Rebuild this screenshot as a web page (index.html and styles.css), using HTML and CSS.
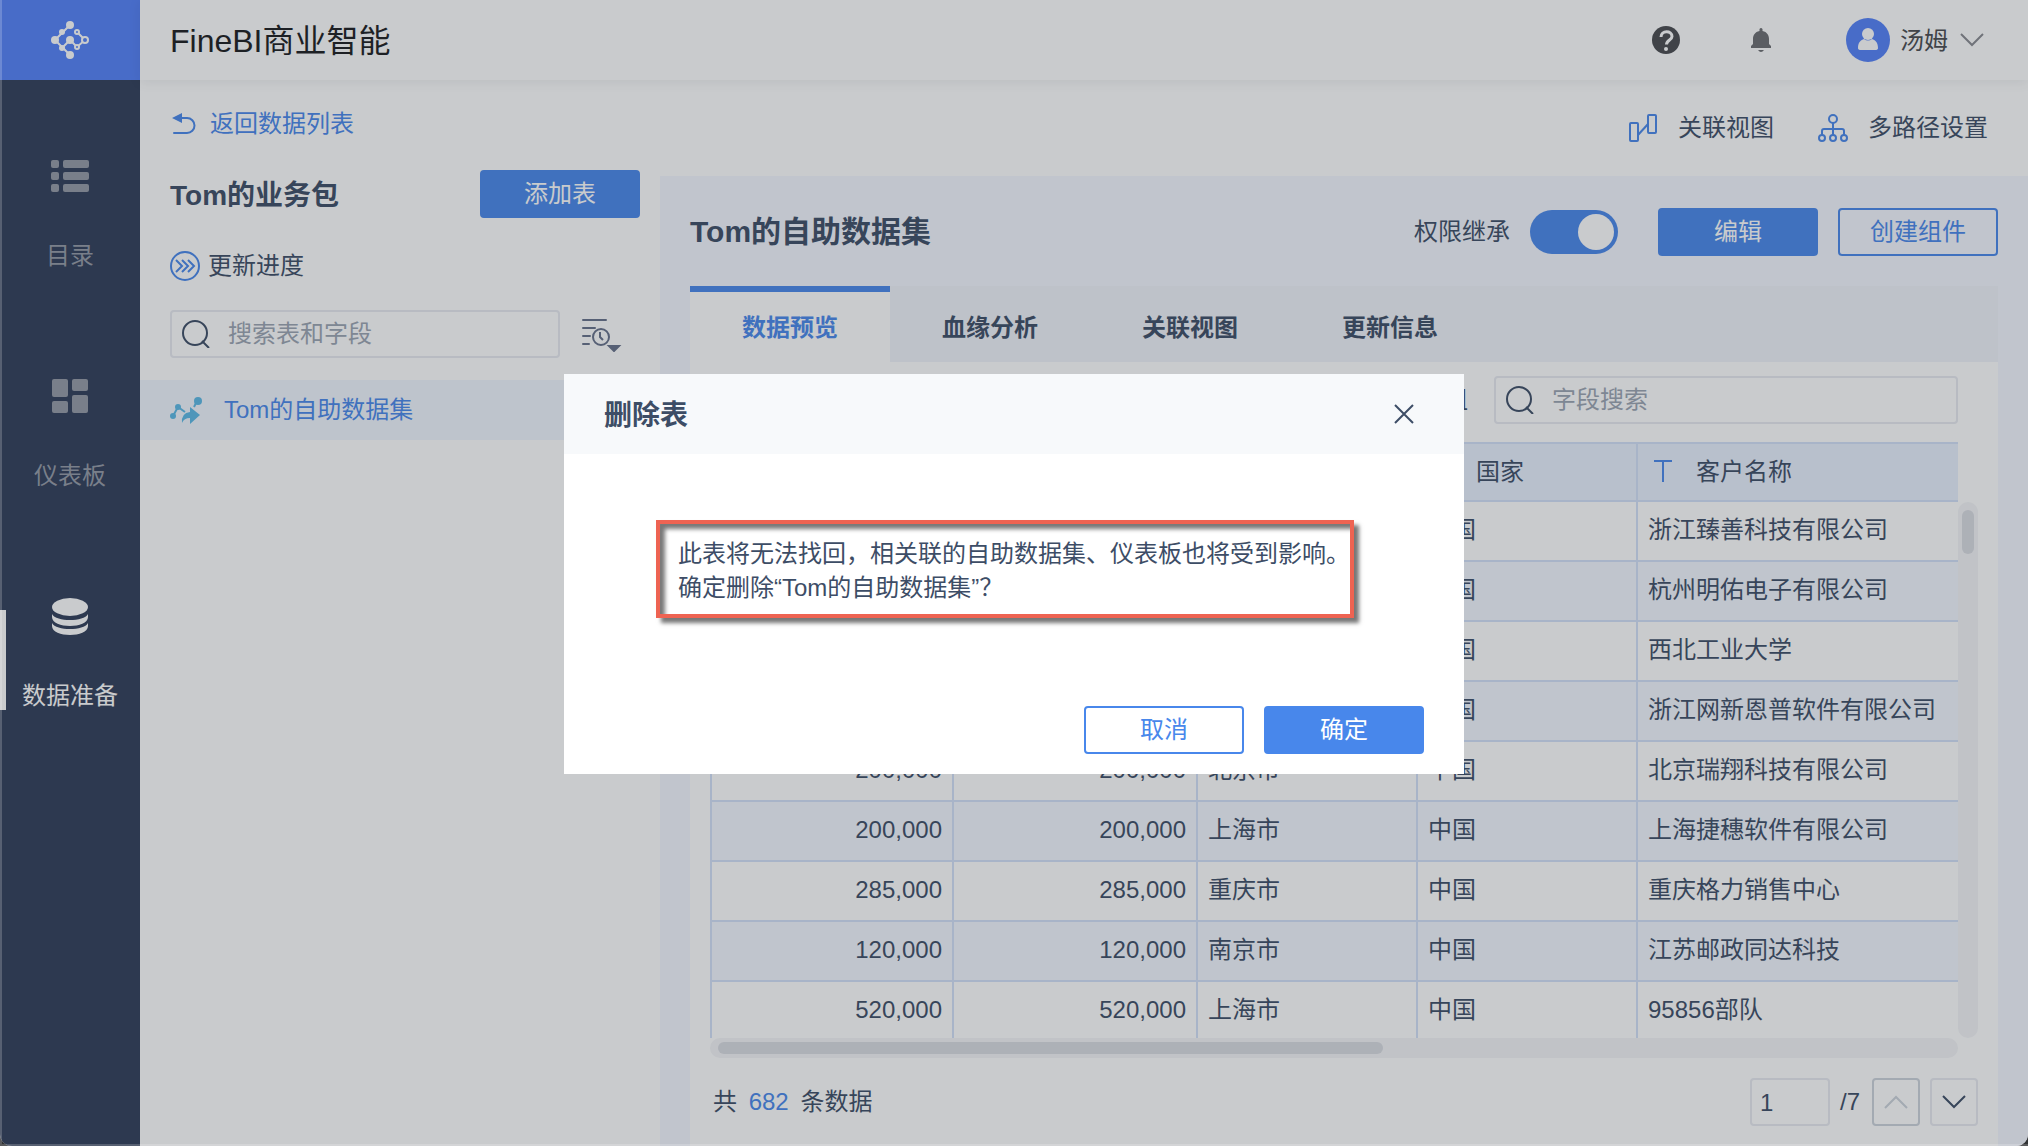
FILE: index.html
```html
<!DOCTYPE html>
<html lang="zh-CN">
<head>
    <meta charset="UTF-8">
    <meta name="viewport" content="width=device-width, initial-scale=1.0">
    <title>FineBI商业智能</title>
    <link rel="stylesheet" href="styles.css">
</head>
<body>
    <div class="app">
        <aside class="sidebar">
            <a href="#" class="logo" aria-label="FineBI">
                <svg width="40" height="40" viewBox="0 0 40 40" fill="none" stroke="#fff" stroke-width="2">
                    <path d="M20 5L5 20L20 35M12 28L20 20L27 27L35 20L27 12"/>
                    <g fill="#fff" stroke="none">
                        <circle cx="20" cy="5" r="4"/>
                        <circle cx="12" cy="12" r="3"/>
                        <circle cx="5" cy="20" r="4"/>
                        <circle cx="12" cy="28" r="3"/>
                        <circle cx="20" cy="20" r="4"/>
                        <circle cx="20" cy="35" r="4"/>
                    </g>
                    <g fill="#5380f9">
                        <circle cx="27" cy="12" r="2"/>
                        <circle cx="27" cy="27" r="2"/>
                        <circle cx="35" cy="20" r="3"/>
                    </g>
                </svg>
            </a>
            <nav class="side-nav">
                <a href="#" class="side-item">
                    <svg width="40" height="40" viewBox="0 0 40 40" fill="currentColor">
                        <rect x="1" y="4" width="8" height="8" rx="2"/><rect x="13" y="4" width="26" height="8" rx="2"/>
                        <rect x="1" y="16" width="8" height="8" rx="2"/><rect x="13" y="16" width="26" height="8" rx="2"/>
                        <rect x="1" y="28" width="8" height="8" rx="2"/><rect x="13" y="28" width="26" height="8" rx="2"/>
                    </svg>
                    <span>目录</span>
                </a>
                <a href="#" class="side-item">
                    <svg width="40" height="40" viewBox="0 0 40 40" fill="currentColor">
                        <rect x="2" y="3" width="16" height="18" rx="2"/><rect x="22" y="3" width="16" height="12" rx="2"/>
                        <rect x="2" y="25" width="16" height="12" rx="2"/><rect x="22" y="19" width="16" height="18" rx="2"/>
                    </svg>
                    <span>仪表板</span>
                </a>
                <a href="#" class="side-item active">
                    <svg width="40" height="40" viewBox="0 0 40 40" fill="currentColor">
                        <ellipse cx="20" cy="11" rx="18" ry="9"/>
                        <path d="M2 18C6 26 34 26 38 18V21C38 33 2 33 2 21Z"/>
                        <path d="M2 27C6 35 34 35 38 27V30C38 42 2 42 2 30Z"/>
                    </svg>
                    <span>数据准备</span>
                </a>
            </nav>
        </aside>

        <div class="main">
            <header class="top-bar">
                <h1>FineBI商业智能</h1>
                <button class="icon-btn help" aria-label="帮助">
                    <svg width="28" height="28" viewBox="0 0 28 28" fill="none">
                        <circle cx="14" cy="14" r="14" fill="#484a4e"/>
                        <path d="M9 11C9 4 20 4 20 10.500C20 14 14.500 14 14.500 18.500" stroke="#fff" stroke-width="3"/>
                        <circle cx="14" cy="23" r="2" fill="#fff"/>
                    </svg>
                </button>
                <button class="icon-btn bell" aria-label="消息">
                    <svg width="28" height="28" viewBox="0 0 28 28" fill="#6b6c70">
                        <path d="M12.500 5V3Q14 1 15.500 3V5C20 6 22 9 22 13V18L24 20V22H4V20L6 18V13C6 9 8 6 12.500 5ZM11 24H17Q14 28 11 24Z"/>
                    </svg>
                </button>
                <button class="user">
                    <svg width="44" height="44" viewBox="0 0 44 44">
                        <circle cx="22" cy="22" r="22" fill="#5380f9"/>
                        <circle cx="22" cy="16" r="6" fill="#fff"/>
                        <path d="M12 30C12 24 15 22 18 21Q22 24 26 21C29 22 32 24 32 30Q32 32 29 32H15Q12 32 12 30Z" fill="#fff"/>
                    </svg>
                    <span>汤姆</span>
                    <svg width="24" height="14" viewBox="0 0 24 14" fill="none" stroke="#888a90" stroke-width="2"><path d="M1 1L12 12L23 1"/></svg>
                </button>
            </header>

            <div class="workspace">
                <section class="package">
                    <a href="#" class="back">
                        <svg width="28" height="24" viewBox="0 0 28 24" fill="none" stroke="#4887eb" stroke-width="2">
                            <path d="M8 6H17A7.500 7.500 0 0 1 17 21H4" stroke-linecap="round"/>
                            <path d="M2 6L12 1V11Z" fill="#4887eb" stroke="none"/>
                        </svg>
                        返回数据列表
                    </a>
                    <div class="package-head">
                        <h2>Tom的业务包</h2>
                        <button class="btn primary">添加表</button>
                    </div>
                    <a href="#" class="progress">
                        <svg width="30" height="30" viewBox="0 0 30 30" fill="none" stroke="#4887eb" stroke-width="2">
                            <circle cx="15" cy="15" r="14"/>
                            <path d="M6 9L12 15L6 21M12 9L18 15L12 21M18 9L24 15L18 21"/>
                        </svg>
                        更新进度
                    </a>
                    <div class="package-search">
                        <div class="search">
                            <svg width="28" height="28" viewBox="0 0 28 28" fill="none" stroke="#3d4d66" stroke-width="2"><circle cx="13" cy="13" r="12"/><path d="M20 21L27 28"/></svg>
                            <input type="text" placeholder="搜索表和字段" aria-label="搜索表和字段">
                        </div>
                        <button class="icon-btn" aria-label="排序">
                            <svg width="40" height="36" viewBox="0 0 40 36" fill="none" stroke="#66708a" stroke-width="2">
                                <path d="M1 4H24M1 12H13M1 20H8M1 28H7" stroke-linecap="round"/>
                                <circle cx="19" cy="21" r="8"/>
                                <path d="M18 16V21L21 24"/>
                                <path d="M27 30H37L32 35Z" fill="#66708a"/>
                            </svg>
                        </button>
                    </div>
                    <a href="#" class="table-item">
                        <svg width="34" height="30" viewBox="0 0 34 30" fill="#5bb9e6">
                            <path d="M3 21L8 12L15 17" fill="none" stroke="#5bb9e6" stroke-width="2"/>
                            <circle cx="3" cy="21" r="3"/>
                            <circle cx="8" cy="12" r="3"/>
                            <circle cx="28" cy="6" r="4"/>
                            <path d="M24 12L26 8" stroke="#5bb9e6" stroke-width="2"/>
                            <path d="M20 12L30 20L20 29V23Q14 23 12 28Q11 18 20 17Z"/>
                        </svg>
                        Tom的自助数据集
                    </a>
                </section>

                <section class="detail">
                    <div class="links">
                        <a href="#">
                            <svg width="30" height="30" viewBox="0 0 30 30" fill="none" stroke="#4887eb" stroke-width="2">
                                <rect x="2" y="10" width="8" height="18" rx="1"/>
                                <rect x="20" y="2" width="8" height="18" rx="1"/>
                                <path d="M10 22L20 11"/>
                            </svg>
                            关联视图
                        </a>
                        <a href="#">
                            <svg width="30" height="30" viewBox="0 0 30 30" fill="none" stroke="#4887eb" stroke-width="2">
                                <circle cx="15" cy="6" r="4"/>
                                <circle cx="4" cy="25" r="3"/>
                                <circle cx="15" cy="25" r="3"/>
                                <circle cx="26" cy="25" r="3"/>
                                <path d="M15 10V22M4 22V18Q4 16 6 16H24Q26 16 26 18V22"/>
                            </svg>
                            多路径设置
                        </a>
                    </div>

                    <div class="panel">
                        <div class="panel-head">
                            <h2>Tom的自助数据集</h2>
                            <label for="inherit">权限继承</label>
                            <input type="checkbox" id="inherit" class="switch" checked>
                            <button class="btn primary">编辑</button>
                            <button class="btn">创建组件</button>
                        </div>

                        <div class="tabs">
                            <button class="tab active">数据预览</button>
                            <button class="tab">血缘分析</button>
                            <button class="tab">关联视图</button>
                            <button class="tab">更新信息</button>
                        </div>

                        <div class="preview">
                            <div class="preview-bar">
                                <span>分组</span>
                                <div class="search">
                                    <svg width="28" height="28" viewBox="0 0 28 28" fill="none" stroke="#3d4d66" stroke-width="2"><circle cx="13" cy="13" r="12"/><path d="M20 21L27 28"/></svg>
                                    <input type="text" placeholder="字段搜索" aria-label="字段搜索">
                                </div>
                            </div>

                            <div class="grid">
                                <div class="table-wrap">
                                    <table>
                                        <colgroup>
                                            <col class="col-num"><col class="col-amount"><col class="col-text"><col class="col-text"><col>
                                        </colgroup>
                                        <thead>
                                            <tr>
                                                <th><i>#</i>合同金额</th>
                                                <th><i>#</i>回款金额</th>
                                                <th><svg class="type" width="18" height="22" viewBox="0 0 18 22"><path d="M0 1H18M9 1V22"/></svg>城市</th>
                                                <th><svg class="type" width="18" height="22" viewBox="0 0 18 22"><path d="M0 1H18M9 1V22"/></svg>国家</th>
                                                <th><svg class="type" width="18" height="22" viewBox="0 0 18 22"><path d="M0 1H18M9 1V22"/></svg>客户名称</th>
                                            </tr>
                                        </thead>
                                        <tbody>
                                            <tr><td class="num">200,000</td><td class="num">200,000</td><td>杭州市</td><td>中国</td><td>浙江臻善科技有限公司</td></tr>
                                            <tr><td class="num">200,000</td><td class="num">200,000</td><td>杭州市</td><td>中国</td><td>杭州明佑电子有限公司</td></tr>
                                            <tr><td class="num">200,000</td><td class="num">200,000</td><td>西安市</td><td>中国</td><td>西北工业大学</td></tr>
                                            <tr><td class="num">200,000</td><td class="num">200,000</td><td>杭州市</td><td>中国</td><td>浙江网新恩普软件有限公司</td></tr>
                                            <tr><td class="num">200,000</td><td class="num">200,000</td><td>北京市</td><td>中国</td><td>北京瑞翔科技有限公司</td></tr>
                                            <tr><td class="num">200,000</td><td class="num">200,000</td><td>上海市</td><td>中国</td><td>上海捷穗软件有限公司</td></tr>
                                            <tr><td class="num">285,000</td><td class="num">285,000</td><td>重庆市</td><td>中国</td><td>重庆格力销售中心</td></tr>
                                            <tr><td class="num">120,000</td><td class="num">120,000</td><td>南京市</td><td>中国</td><td>江苏邮政同达科技</td></tr>
                                            <tr><td class="num">520,000</td><td class="num">520,000</td><td>上海市</td><td>中国</td><td>95856部队</td></tr>
                                        </tbody>
                                    </table>
                                </div>
                                <div class="scroll-y"><div class="thumb"></div></div>
                                <div class="scroll-x"><div class="thumb"></div></div>
                            </div>

                            <footer class="pager">
                                <p>共 <b>682</b> 条数据</p>
                                <input type="text" value="1" aria-label="页码">
                                <span>/7</span>
                                <button class="page-btn" disabled aria-label="上一页">
                                    <svg width="24" height="14" viewBox="0 0 24 14" fill="none" stroke="currentColor" stroke-width="2"><path d="M1 13L12 2L23 13"/></svg>
                                </button>
                                <button class="page-btn" aria-label="下一页">
                                    <svg width="24" height="14" viewBox="0 0 24 14" fill="none" stroke="currentColor" stroke-width="2"><path d="M1 1L12 12L23 1"/></svg>
                                </button>
                            </footer>
                        </div>
                    </div>
                </section>
            </div>
        </div>
    </div>

    <div class="mask">
        <div class="dialog" role="dialog" aria-labelledby="dialog-title">
            <div class="dialog-head">
                <h2 id="dialog-title">删除表</h2>
                <button class="icon-btn" aria-label="关闭">
                    <svg width="20" height="20" viewBox="0 0 20 20" fill="none" stroke="#3d4d66" stroke-width="2"><path d="M1 1L19 19M19 1L1 19"/></svg>
                </button>
            </div>
            <div class="dialog-body">
                <p class="warning">此表将无法找回，相关联的自助数据集、仪表板也将受到影响。<br>确定删除“Tom的自助数据集”？</p>
            </div>
            <div class="dialog-foot">
                <button class="btn">取消</button>
                <button class="btn primary">确定</button>
            </div>
        </div>
    </div>
</body>
</html>
```

FILE: styles.css
```css
* {
    box-sizing: border-box;
}
body {
    margin: 0;
    background-color: #333;
    color: #3d4d66;
    font-family: "Liberation Sans", "Noto Sans CJK SC", sans-serif;
    font-size: 24px;
    line-height: 34px;
}
h1, h2, p {
    margin: 0;
}
h2 {
    padding-top: 4px;
}
a {
    color: inherit;
    text-decoration: none;
}
svg {
    flex: none;
    display: block;
}
button, input {
    font: inherit;
    color: inherit;
    margin: 0;
}
.app {
    display: flex;
    height: 100vh;
    overflow: hidden;
    background-color: #fff;
    border-radius: 0 0 12px 12px;
}

/* sidebar */
.sidebar {
    flex: none;
    width: 140px;
    background-color: #2f3c58;
}
.logo {
    display: flex;
    align-items: center;
    justify-content: center;
    height: 80px;
    background-color: #5380f9;
}
.side-nav {
    padding-top: 30px;
}
.side-item {
    display: flex;
    flex-direction: column;
    align-items: center;
    gap: 43px;
    height: 220px;
    padding-top: 46px;
    color: #949aa6;
}
.side-item.active {
    position: relative;
    color: #fff;
}
.side-item.active::before {
    content: "";
    position: absolute;
    left: 0;
    top: 60px;
    width: 6px;
    height: 100px;
    background-color: #fff;
}

/* header */
.main {
    flex: 1;
    min-width: 0;
    display: flex;
    flex-direction: column;
}
.top-bar {
    display: flex;
    align-items: center;
    height: 80px;
    padding: 0 44px 0 30px;
    box-shadow: 0 2px 12px rgba(0, 20, 40, 0.08);
}
.top-bar h1 {
    flex: 1;
    padding-top: 2px;
    color: #1a1b1e;
    font-size: 32px;
    font-weight: 400;
    line-height: 44px;
}
.icon-btn {
    padding: 0;
    border: 0;
    background: none;
}
.bell {
    margin: 0 63px 0 67px;
}
.user {
    display: flex;
    align-items: center;
    gap: 12px;
    margin-left: 8px;
    padding: 0;
    border: 0;
    background: none;
    color: #484a4e;
}
.user span {
    padding-top: 2px;
    margin-left: -2px;
}

/* left column */
.workspace {
    flex: 1;
    min-height: 0;
    display: flex;
}
.package {
    flex: none;
    width: 520px;
}
.back, .progress {
    display: flex;
    align-items: center;
    padding-left: 30px;
}
.back {
    height: 88px;
    gap: 12px;
    color: #4887eb;
}
.package-head {
    display: flex;
    align-items: center;
    justify-content: space-between;
    height: 52px;
    padding: 0 20px 0 30px;
}
.package-head h2 {
    font-size: 28px;
}
.progress {
    height: 90px;
    gap: 8px;
    padding-top: 2px;
}
.package-search {
    display: flex;
    align-items: center;
    gap: 22px;
    padding: 0 38px 22px 30px;
}
.search {
    display: flex;
    align-items: center;
    gap: 18px;
    height: 48px;
    padding: 0 10px;
    border: 2px solid #e8eaf0;
    border-radius: 4px;
}
.package-search .search {
    flex: 1;
}
.search input {
    flex: 1;
    min-width: 0;
    padding: 0;
    border: 0;
    outline: 0;
    background: none;
}
.search input::placeholder {
    color: #9ba4b2;
}
.table-item {
    display: flex;
    align-items: center;
    gap: 20px;
    height: 60px;
    padding-left: 30px;
    background-color: #f1f6fe;
    color: #4887eb;
}

/* buttons */
.btn {
    flex: none;
    width: 160px;
    height: 48px;
    padding: 0;
    border: 2px solid #4887eb;
    border-radius: 4px;
    background: none;
    color: #4887eb;
}
.btn.primary {
    background-color: #4887eb;
    color: #fff;
}

/* right column */
.detail {
    flex: 1;
    min-width: 0;
    display: flex;
    flex-direction: column;
}
.links {
    display: flex;
    align-items: center;
    justify-content: flex-end;
    gap: 44px;
    height: 96px;
    padding-right: 40px;
}
.links a {
    display: flex;
    align-items: center;
    gap: 20px;
}
.panel {
    flex: 1;
    min-height: 0;
    display: flex;
    flex-direction: column;
    padding: 0 30px;
    background-color: #f4f7ff;
}
.panel-head {
    display: flex;
    align-items: center;
    gap: 20px;
    height: 110px;
    padding-top: 2px;
}
.panel-head h2 {
    flex: 1;
    padding-top: 0;
    font-size: 30px;
}
.switch {
    appearance: none;
    width: 88px;
    height: 44px;
    margin-right: 20px;
    padding: 4px;
    border-radius: 22px;
    background-color: #4887eb;
}
.switch::before {
    content: "";
    display: block;
    width: 36px;
    height: 36px;
    margin-left: auto;
    border-radius: 50%;
    background-color: #fff;
}
.tabs {
    display: flex;
    height: 76px;
    background-color: #f0f3fa;
}
.tab {
    width: 200px;
    padding: 2px 0 0;
    border: 0;
    border-top: 6px solid transparent;
    background: none;
    font-weight: 600;
}
.tab.active {
    border-top-color: #4887eb;
    background-color: #fff;
    color: #4887eb;
}
.preview {
    flex: 1;
    min-height: 0;
    display: flex;
    flex-direction: column;
    padding: 0 20px;
    background-color: #fff;
}
.preview-bar {
    display: flex;
    align-items: center;
    justify-content: flex-end;
    gap: 26px;
    height: 80px;
    padding: 0 20px 4px 0;
}
.preview-bar .search {
    width: 464px;
}

/* data table */
.grid {
    flex: 1;
    min-height: 0;
    display: grid;
    grid-template-columns: minmax(0, 1fr) 20px;
    grid-template-rows: minmax(0, 1fr) 20px;
}
.table-wrap {
    overflow: hidden;
}
table {
    width: 100%;
    table-layout: fixed;
    border-collapse: separate;
    border-spacing: 0;
}
.col-num {
    width: 242px;
}
.col-amount {
    width: 244px;
}
.col-text {
    width: 220px;
}
th, td {
    height: 60px;
    padding: 0 10px;
    border-left: 2px solid #d3e1f8;
    border-bottom: 2px solid #d3e1f8;
    text-align: left;
    font-weight: 400;
    white-space: nowrap;
}
th {
    padding-left: 16px;
    border-top: 2px solid #d3e1f8;
    background-color: #e9f0fe;
}
th i {
    margin-right: 24px;
    color: #4887eb;
}
.type {
    display: inline-block;
    vertical-align: -2px;
    margin-right: 24px;
    fill: none;
    stroke: #4887eb;
    stroke-width: 2;
}
tbody td {
    padding-bottom: 2px;
}
tbody tr:nth-child(even) {
    background-color: #f3f7ff;
}
td.num {
    text-align: right;
}
.scroll-y {
    margin-top: 60px;
    padding: 8px 4px;
    border-radius: 10px;
    background-color: #f4f5f7;
}
.scroll-x {
    padding: 4px 8px;
    border-radius: 10px;
    background-color: #f4f5f7;
}
.thumb {
    border-radius: 6px;
    background-color: #dadce2;
}
.scroll-y .thumb {
    height: 44px;
}
.scroll-x .thumb {
    width: 54%;
    height: 12px;
}
.pager {
    display: flex;
    align-items: center;
    gap: 10px;
    height: 88px;
}
.pager p {
    flex: 1;
    padding-left: 3px;
}
.pager b {
    margin: 0 5px;
    color: #4887eb;
    font-weight: 400;
}
.pager input {
    width: 80px;
    height: 48px;
    padding: 2px 8px 0;
    border: 2px solid #e8eaf0;
    border-radius: 4px;
    background: none;
}
.pager span {
    padding-right: 2px;
}
.page-btn {
    display: flex;
    align-items: center;
    justify-content: center;
    width: 48px;
    height: 48px;
    padding: 0;
    border: 2px solid #e8eaf0;
    border-radius: 4px;
    background: none;
}
.page-btn:disabled {
    border-color: #ccd3db;
    color: #ccd3db;
}

/* dialog */
.mask {
    position: fixed;
    inset: 0;
    display: flex;
    align-items: center;
    justify-content: center;
    padding-top: 2px;
    background-color: rgba(40, 46, 56, 0.25);
    box-shadow: inset 2px -2px 0 rgba(255, 255, 255, 0.2);
}
.dialog {
    display: flex;
    flex-direction: column;
    width: 900px;
    min-height: 400px;
    background-color: #fff;
}
.dialog-head {
    display: flex;
    align-items: center;
    justify-content: space-between;
    height: 80px;
    padding: 0 50px 0 40px;
    background-color: #f7f9fb;
}
.dialog-head h2 {
    font-size: 28px;
}
.dialog-body {
    flex: 1;
    display: flex;
    align-items: flex-start;
    padding: 66px 92px 20px;
}
.warning {
    padding: 13px 0 9px 18px;
    border: 4px solid #ee6352;
    box-shadow: 5px 5px 4px #777, inset 5px 5px 4px #777;
}
.dialog-foot {
    display: flex;
    justify-content: flex-end;
    gap: 20px;
    padding: 0 40px 20px;
}
```
